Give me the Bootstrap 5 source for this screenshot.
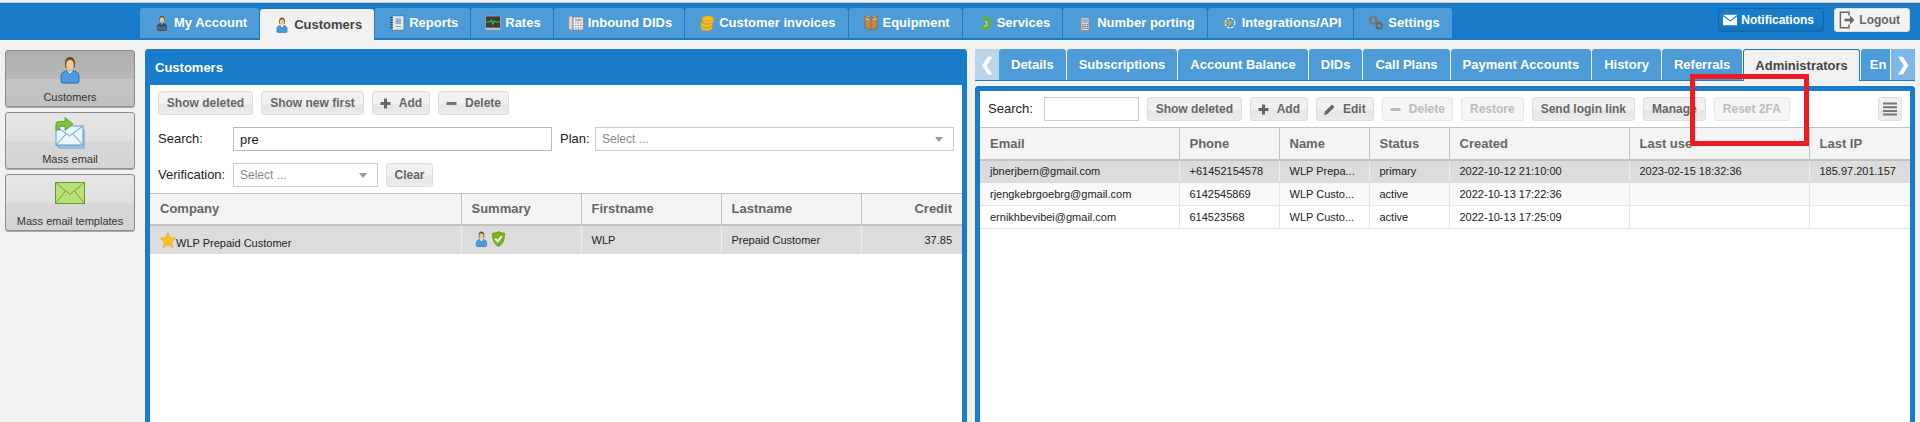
<!DOCTYPE html>
<html lang="en">
<head>
<meta charset="utf-8">
<title>Customers</title>
<link rel="stylesheet" href="https://cdn.jsdelivr.net/npm/bootstrap@5.3.0/dist/css/bootstrap.min.css">
<style>
html,body{height:422px;overflow:hidden}
body{background:#f1f1f1;font-family:"Liberation Sans",Arial,sans-serif;font-size:13px;color:#222;position:relative}
.strip{height:3px;background:#f1f1f1;border-bottom:1px solid #ccc}
.topbar{height:37px;background:#187ccb;padding:5px 10px 0 140px}
.top-nav{column-gap:1px}
.top-tab{height:31px;background:#4d9cd8;color:#fff;font-weight:700;font-size:13px;padding:0 12px 0 14px;border-radius:3px 3px 0 0;gap:4px;border-bottom:1px solid #187ccb}
.top-tab.on{background:#f1f1f1;color:#444;margin-top:1px;border-bottom:0}
.top-tab svg{width:16px;height:16px;flex:none}
.head-btn{height:24px;font-size:12px;font-weight:700;border-radius:3px;gap:4px;padding:0 9px 0 4px}
.head-group{gap:10px}
.notif{width:106px;background:#187ccb;border:1px solid #0f68ad;color:#fff;box-shadow:inset 0 -8px 8px -6px #1269ac}
.logout{width:76px;background:#f3f3f3;border:1px solid #ddd;color:#666}
.main{padding:9px 5px 0;gap:10px;height:382px}
.side{width:130px;flex:none;gap:5px;margin-top:1px}
.side-btn{height:57px;border:1px solid #8d8d8d;border-radius:3px;background:linear-gradient(#e6e6e6 0,#e0e0e0 50%,#d8d8d8 50%,#d4d4d4 100%);font-size:11px;color:#333;padding-top:4px;box-shadow:0 1px 0 #aaa}
.side-btn.on{background:linear-gradient(#adadad 0,#b8b8b8 50%,#c4c4c4 50%,#c0c0c0 100%)}
.side-btn svg{width:30px;height:32px;flex:none}
.side-btn svg.tall{height:28px;margin:1px 0 3px}
.side-btn svg.wide{height:22px;margin:3px 0 7px}
.side-label{line-height:14px;margin-top:3px}
.left-pane{width:822px;flex:none;margin-right:-2px;border:5px solid #187ccb;border-top:0;border-bottom:0;border-radius:4px 4px 0 0;background:#fff;height:390px}
.pane-title{height:36px;background:#187ccb;color:#fff;font-weight:700;font-size:13px;margin:0 -5px;padding:1px 10px 0;border-radius:4px 4px 0 0}
.bar{gap:8px}
.left-bar{padding:6px 8px 0;height:30px}
.tool{height:24px;background:linear-gradient(#f1f1f1 0,#f1f1f1 50%,#e6e6e6 60%,#ececec 100%);border:1px solid #dedede;border-radius:3px;color:#666;font-size:12px;font-weight:700;padding:0;line-height:22px;gap:8px;white-space:nowrap}
.tool:hover{color:#666}
.tool svg{width:11px;height:11px;flex:none}
.tool.off{color:#bcbcbc;background:#f5f5f5;border-color:#e6e6e6}
.w-del{width:95px}.w-new{width:103px}.w-add{width:58px}.w-rem{width:71px}.w-clr{width:47px}
.w-res{width:63px}.w-send{width:103px}.w-man{width:63px}.w-2fa{width:76px}
.lbl{font-size:13px;color:#222}
.plan-lbl{width:35px}
.form-row{padding:0 8px;height:24px;margin-top:12px}
.lbl-a{width:75px;flex:none}
.field{height:24px;border:1px solid #ccc;border-radius:0;background:#fff;font-size:13px;color:#222;padding:0 6px;box-shadow:none;min-height:0}
.field.q{width:319px;flex:none;border-color:#bbb}
.pick{color:#888;font-size:12px}
.caret{width:0;height:0;border-left:4px solid transparent;border-right:4px solid transparent;border-top:5px solid #999}
.plan{width:359px;flex:none}
.verify{width:145px;flex:none}
.grid-wrap{margin-top:6px}
.data-grid{table-layout:fixed;width:100%;margin:0}
.data-grid.table>:not(caption)>*>*{padding:0 10px;border:0;border-right:1px solid #e4e4e4;border-bottom:1px solid #e4e4e4;font-size:11px;color:#222;background:transparent;box-shadow:none;white-space:nowrap;overflow:hidden}
.data-grid.table>thead>tr>th{height:31px;background:#f4f4f4;color:#666;font-weight:700;font-size:13px;border-top:1px solid #c2c2c2;border-right:1px solid #c2c2c2;border-bottom:2px solid #c2c2c2;vertical-align:middle}
.data-grid.table.rg>thead>tr>th{height:32px}
.data-grid.table>tbody>tr.sel>td{background:#dcdcdc;border-right-color:#eee;border-bottom-color:#dcdcdc}
.data-grid.table>tbody>tr.alt>td{background:#f9f9f9}
.data-grid.table>:not(caption)>*>*:last-child{border-right:0}
.lg td{height:29px;vertical-align:top}
.lg td.pad{padding-top:6px!important}
.lg .co{font-size:11px!important;padding-top:6px!important}
.lg .co svg{width:16px;height:16px;vertical-align:-1px}
.lg .sm svg{width:13px;height:16px;vertical-align:top}
.lg .sm{padding-top:5px!important;padding-left:13px!important}
.c1{width:311px}.c2{width:120px}.c3{width:140px}.c4{width:140px}
.rg td{height:23px;vertical-align:middle}
.d1{width:199px}.d2{width:100px}.d3{width:90px}.d4{width:80px}.d5{width:180px}.d6{width:180px}
.right-pane{width:940px;flex:none}
.rt-row{height:32px;border-bottom:1px solid #187ccb}
.nav-arrow{width:24px;height:31px;flex:none;color:#fff;font-size:17px;font-weight:700;background:#b9d5ea;padding:0}
.nav-arrow.next{background:#7fb8e4}
.rt-strip{gap:1px;flex:1;overflow:hidden;height:32px}
.rt-tab{height:31px;background:#4d9cd8;color:#fff;font-size:13px;font-weight:700;padding:0 12px;white-space:nowrap;flex:none;border-radius:3px 3px 0 0}
.rt-tab.on{height:32px;background:#f1f1f1;color:#444;border:1px solid #187ccb;border-bottom:0;padding:0 11px}
.rt-tab.cut{width:29px;padding:0 0 0 9px;border-radius:3px 0 0 0}
.rt-box{margin-top:5px;border:5px solid #187ccb;border-bottom:0;border-radius:4px 4px 0 0;background:#fff;height:340px}
.rt-bar{height:36px;padding:6px 8px}
.rt-q{width:95px;flex:none;margin-left:3px}
.menu-btn{width:24px;padding:0;margin-left:auto}
.menu-btn svg{width:16px;height:16px}
.mark-box{position:absolute;left:1690px;top:74px;width:119px;height:72px;border:5px solid #ed1c24;pointer-events:none}
</style>
</head>
<body>
<svg width="0" height="0" class="position-absolute">
<defs>
<symbol id="i-person" viewBox="0 0 16 22"><path d="M4 6.500C4 2.500 5.500.7 8 .7s4 1.800 4 5.800l-.6 3H4.600z" fill="#7a4a22"/><ellipse cx="8" cy="7" rx="3" ry="4" fill="#f2c79a"/><path d="M1 20v-4c0-2.600 2-4 4.500-4.400L8 14l2.500-2.400C13 12 15 13.400 15 16v4c0 .8-.6 1.300-1.400 1.300H2.400C1.600 21.300 1 20.800 1 20z" fill="#4a9ae0" stroke="#1d5f9e" stroke-width=".7"/><path d="M5.600 11.600 8 14l2.400-2.400L8 12.500z" fill="#fff"/></symbol>
<symbol id="i-suit" viewBox="0 0 16 22"><path d="M4.500 6C4.500 2.500 5.800 1 8 1s3.500 1.500 3.500 5l-.5 3H5z" fill="#7a4a22"/><ellipse cx="8" cy="7" rx="2.800" ry="3.800" fill="#efc090"/><path d="M1.500 20v-4c0-2.500 2-4 4.300-4.400L8 15l2.200-3.400c2.300.4 4.300 1.900 4.300 4.400v4c0 .8-.6 1.300-1.400 1.300H2.900c-.8 0-1.400-.5-1.400-1.300z" fill="#3d4a5c" stroke="#222c38" stroke-width=".6"/><path d="M1.500 16h13v4.500h-13z" fill="#59687c"/></symbol>
<symbol id="i-notebook" viewBox="0 0 16 16"><rect x="3" y=".7" width="12" height="14.600" fill="#dfe9f3" stroke="#5b7c9e"/><rect x="6.500" y="3.500" width="5.500" height="5.500" fill="#8fb2d1"/><path d="M6.500 11.500H12" stroke="#8aa"/><path d="M1 2.500h3M1 5h3M1 7.500h3M1 10h3M1 12.500h3" stroke="#445"/></symbol>
<symbol id="i-monitor" viewBox="0 0 16 16"><rect x=".5" y="1" width="15" height="12" fill="#3a3d3a" stroke="#999"/><path d="M1 7h4.500l1-2.500L8 9.500l1.500-4 .8 1.500H15" stroke="#2fd14b" fill="none"/><rect x=".5" y="13" width="15" height="2" fill="#bbb"/></symbol>
<symbol id="i-phone" viewBox="0 0 16 16"><rect x=".7" y="1" width="4.300" height="14" rx="1.500" fill="#d8d8d8" stroke="#8a8a8a"/><rect x="5" y="2" width="10.300" height="13" fill="#f3f3f3" stroke="#8a8a8a"/><rect x="7" y="3.800" width="6.500" height="2.500" fill="#9ab6cd"/><path d="M7 8h6.500M7 10.500h6.500M7 13h6.500" stroke="#888" stroke-dasharray="1.500 1"/></symbol>
<symbol id="i-coins" viewBox="0 0 16 18"><g fill="#f5bf20" stroke="#d89808" stroke-width=".5"><ellipse cx="9" cy="4" rx="6.500" ry="3"/><path d="M2.500 4v3c0 1.600 2.900 3 6.500 3s6.500-1.400 6.500-3V4c0 1.600-2.900 3-6.500 3s-6.500-1.400-6.500-3z"/><path d="M1 8v3c0 1.600 2.900 3 6.500 3s6.500-1.400 6.500-3V8.500C12 10 10 10.500 7.500 10.500S2 9.500 1 8z"/><path d="M1 11.500v3c0 1.600 2.900 3 6.500 3s6.500-1.400 6.500-3v-3c0 1.600-2.900 3-6.500 3s-6.500-1.400-6.500-3z"/></g></symbol>
<symbol id="i-box" viewBox="0 0 16 18"><path d="M8 4 1 2v12l7 3.500 7-3.500V2z" fill="#bc8a4c" stroke="#80582a" stroke-width=".6"/><path d="M1 2 4.500.5 8 2l3.500-1.500L15 2 8 4.500zM1 2v3.500L5 7l3-2.500L11 7l4-1.500V2" fill="#d9ad72" stroke="#80582a" stroke-width=".5"/><path d="M8 4.500v13" stroke="#80582a" stroke-width=".6"/></symbol>
<symbol id="i-cycle" viewBox="0 0 16 18"><path d="M8 3a6 6 0 1 1-5 9.500" fill="none" stroke="#6cae18" stroke-width="2.600"/><path d="M8.500.5 4 3.300 8.500 6.500z" fill="#6cae18"/><path d="M8 7.500a2.500 2.500 0 1 1-1.500 4.500" fill="none" stroke="#c6dc3a" stroke-width="1.600"/></symbol>
<symbol id="i-mobile" viewBox="0 0 16 18"><rect x="3.500" y="3" width="9" height="14.500" rx="1" fill="#d8d8d8" stroke="#8a8a8a"/><rect x="4.800" y="4.500" width="6.400" height="4.500" fill="#8cb6d8"/><path d="M5 11h1.500m1 0H9m1 0h1.500M5 13h1.500m1 0H9m1 0h1.500M5 15h1.500m1 0H9m1 0h1.500" stroke="#555"/><rect x="10" y=".3" width="1.600" height="3" fill="#888"/></symbol>
<symbol id="i-cog" viewBox="0 0 16 18"><circle cx="8" cy="9" r="5.500" fill="none" stroke="#fff" stroke-width="1.200" stroke-dasharray="3 1.400"/><path d="M1 9h8M6.500 6.300 9.500 9l-3 2.700" stroke="#d8a54a" stroke-width="1.500" fill="none"/></symbol>
<symbol id="i-gears" viewBox="0 0 16 18"><circle cx="5" cy="6" r="3.500" fill="none" stroke="#777" stroke-width="2"/><circle cx="5" cy="6" r="5" fill="none" stroke="#777" stroke-width="1.200" stroke-dasharray="1.500 1.500"/><circle cx="11.500" cy="12" r="3" fill="none" stroke="#666" stroke-width="2"/><circle cx="11.500" cy="12" r="4.300" fill="none" stroke="#666" stroke-width="1.200" stroke-dasharray="1.500 1.500"/></symbol>
<symbol id="i-mail-fwd" viewBox="0 0 30 32"><rect x="4" y="13" width="25" height="18" fill="#c7dff2" stroke="#5f9ccc"/><rect x="2" y="11" width="25" height="18" fill="#dcebf7" stroke="#5f9ccc"/><rect x="1" y="9" width="27" height="19" fill="#eaf4fb" stroke="#5f9ccc"/><path d="m1 9 13.500 10L28 9M1 28l10-11M28 28 18 17" fill="none" stroke="#5f9ccc"/><path d="M1 13V7c0-1.500 1-2.500 3-2.500h6V.5l8 6.500-8 6.500V9H6c-1.200 0-1.500 1-1.500 2v2z" fill="#7ec23e" stroke="#4c8c1e" stroke-width=".7"/></symbol>
<symbol id="i-mail-green" viewBox="0 0 30 22"><rect x=".5" y=".5" width="29" height="21" fill="#b9e07a" stroke="#5f9a23"/><path d="m.5.500 14.500 12L29.500.5M.5 21.500l10-12.500M29.500 21.500 19.500 9" fill="none" stroke="#6ea72b"/></symbol>
<symbol id="i-plus" viewBox="0 0 11 11"><path d="M4 .5h3V4h3.500v3H7v3.500H4V7H.5V4H4z" fill="#666"/></symbol>
<symbol id="i-minus" viewBox="0 0 11 11"><rect x=".5" y="4" width="10" height="3" fill="currentColor"/></symbol>
<symbol id="i-pencil" viewBox="0 0 11 11"><path d="M0 11l1-3.500L8 .5l2.500 2.500-7 7z" fill="#666"/></symbol>
<symbol id="i-env" viewBox="0 0 16 12"><rect width="16" height="12" rx="1" fill="#fff"/><path d="m0 1 8 6 8-6" fill="none" stroke="#187ccb" stroke-width="1.300"/></symbol>
<symbol id="i-exit" viewBox="0 0 18 20"><path d="M11 5V1.500H1.500v17H11V15" fill="none" stroke="#666" stroke-width="1.600"/><path d="M6 8.500h6V5l5 5-5 5v-3.500H6z" fill="#666"/></symbol>
<symbol id="i-star" viewBox="0 0 17 17"><path d="m8.500.5 2.500 5.300 5.800.8-4.200 4 1 5.900-5.100-2.800-5.100 2.800 1-5.900-4.200-4 5.800-.8z" fill="#f5c22e" stroke="#e0a316" stroke-width=".6"/></symbol>
<symbol id="i-shield" viewBox="0 0 14 17"><path d="M7 .5c2 1.200 4 1.700 6.500 1.700 0 7-1.500 11.500-6.500 14.300C2 13.700.5 9.200.5 2.200 3 2.200 5 1.700 7 .5z" fill="#7cb518" stroke="#4e8a10" stroke-width=".7"/><path d="m3.500 8 2.500 3 4.500-5.500" fill="none" stroke="#fff" stroke-width="2"/></symbol>
<symbol id="i-lines" viewBox="0 0 16 16"><path d="M1 2.500h14M1 6.200h14M1 9.900h14M1 13.600h14" stroke="#777" stroke-width="2"/></symbol>
</defs>
</svg>

<div class="strip"></div>
<div class="topbar d-flex align-items-start">
  <nav class="d-flex top-nav">
    <a class="top-tab d-flex align-items-center text-decoration-none"><svg><use href="#i-suit"/></svg>My Account</a>
    <a class="top-tab on d-flex align-items-center text-decoration-none"><svg><use href="#i-person"/></svg>Customers</a>
    <a class="top-tab d-flex align-items-center text-decoration-none"><svg><use href="#i-notebook"/></svg>Reports</a>
    <a class="top-tab d-flex align-items-center text-decoration-none"><svg><use href="#i-monitor"/></svg>Rates</a>
    <a class="top-tab d-flex align-items-center text-decoration-none"><svg><use href="#i-phone"/></svg>Inbound DIDs</a>
    <a class="top-tab d-flex align-items-center text-decoration-none"><svg><use href="#i-coins"/></svg>Customer invoices</a>
    <a class="top-tab d-flex align-items-center text-decoration-none"><svg><use href="#i-box"/></svg>Equipment</a>
    <a class="top-tab d-flex align-items-center text-decoration-none"><svg><use href="#i-cycle"/></svg>Services</a>
    <a class="top-tab d-flex align-items-center text-decoration-none"><svg><use href="#i-mobile"/></svg>Number porting</a>
    <a class="top-tab d-flex align-items-center text-decoration-none"><svg><use href="#i-cog"/></svg>Integrations/API</a>
    <a class="top-tab d-flex align-items-center text-decoration-none"><svg><use href="#i-gears"/></svg>Settings</a>
  </nav>
  <div class="head-group ms-auto d-flex">
    <a class="head-btn notif d-flex align-items-center text-decoration-none"><svg width="16" height="12"><use href="#i-env"/></svg>Notifications</a>
    <a class="head-btn logout d-flex align-items-center text-decoration-none"><svg width="18" height="20"><use href="#i-exit"/></svg>Logout</a>
  </div>
</div>

<div class="main d-flex">
  <aside class="side d-flex flex-column">
    <a class="side-btn on d-flex flex-column align-items-center text-decoration-none"><svg class="tall"><use href="#i-person"/></svg><span class="side-label">Customers</span></a>
    <a class="side-btn d-flex flex-column align-items-center text-decoration-none"><svg><use href="#i-mail-fwd"/></svg><span class="side-label">Mass email</span></a>
    <a class="side-btn d-flex flex-column align-items-center text-decoration-none"><svg class="wide"><use href="#i-mail-green"/></svg><span class="side-label">Mass email templates</span></a>
  </aside>

  <section class="left-pane">
    <div class="pane-title d-flex align-items-center">Customers</div>
    <div class="left-bar bar d-flex">
      <button class="tool btn w-del">Show deleted</button>
      <button class="tool btn w-new">Show new first</button>
      <button class="tool btn w-add d-flex align-items-center justify-content-center"><svg><use href="#i-plus"/></svg>Add</button>
      <button class="tool btn w-rem d-flex align-items-center justify-content-center"><svg class="text-secondary"><use href="#i-minus"/></svg>Delete</button>
    </div>
    <div class="form-row d-flex align-items-center">
      <span class="lbl lbl-a">Search:</span>
      <input class="field q form-control" value="pre" aria-label="Search">
      <span class="lbl plan-lbl ms-2">Plan:</span>
      <div class="field plan d-flex align-items-center justify-content-between pick"><span>Select ...</span><i class="caret me-1"></i></div>
    </div>
    <div class="form-row d-flex align-items-center">
      <span class="lbl lbl-a">Verification:</span>
      <div class="field verify d-flex align-items-center justify-content-between pick"><span>Select ...</span><i class="caret me-1"></i></div>
      <button class="tool btn w-clr ms-2">Clear</button>
    </div>
    <div class="grid-wrap">
      <table class="table data-grid lg">
        <colgroup><col class="c1"><col class="c2"><col class="c3"><col class="c4"><col></colgroup>
        <thead><tr><th>Company</th><th>Summary</th><th>Firstname</th><th>Lastname</th><th class="text-end">Credit</th></tr></thead>
        <tbody><tr class="sel">
          <td class="co"><svg><use href="#i-star"/></svg>WLP Prepaid Customer</td>
          <td class="sm"><svg class="me-1"><use href="#i-person"/></svg><svg><use href="#i-shield"/></svg></td>
          <td class="pad">WLP</td><td class="pad">Prepaid Customer</td><td class="pad text-end">37.85</td>
        </tr></tbody>
      </table>
    </div>
  </section>

  <section class="right-pane">
    <div class="rt-row d-flex">
      <button class="nav-arrow btn rounded-0 d-flex align-items-center justify-content-center">❮</button>
      <div class="rt-strip d-flex">
        <a class="rt-tab d-flex align-items-center text-decoration-none">Details</a>
        <a class="rt-tab d-flex align-items-center text-decoration-none">Subscriptions</a>
        <a class="rt-tab d-flex align-items-center text-decoration-none">Account Balance</a>
        <a class="rt-tab d-flex align-items-center text-decoration-none">DIDs</a>
        <a class="rt-tab d-flex align-items-center text-decoration-none">Call Plans</a>
        <a class="rt-tab d-flex align-items-center text-decoration-none">Payment Accounts</a>
        <a class="rt-tab d-flex align-items-center text-decoration-none">History</a>
        <a class="rt-tab d-flex align-items-center text-decoration-none">Referrals</a>
        <a class="rt-tab on d-flex align-items-center text-decoration-none">Administrators</a>
        <a class="rt-tab cut d-flex align-items-center text-decoration-none">En</a>
      </div>
      <button class="nav-arrow next btn rounded-0 d-flex align-items-center justify-content-center">❯</button>
    </div>
    <div class="rt-box">
      <div class="rt-bar bar d-flex align-items-center">
        <span class="lbl">Search:</span>
        <input class="field rt-q form-control" aria-label="Search">
        <button class="tool btn w-del">Show deleted</button>
        <button class="tool btn w-add d-flex align-items-center justify-content-center"><svg><use href="#i-plus"/></svg>Add</button>
        <button class="tool btn w-add d-flex align-items-center justify-content-center"><svg><use href="#i-pencil"/></svg>Edit</button>
        <button class="tool off btn w-rem d-flex align-items-center justify-content-center"><svg><use href="#i-minus"/></svg>Delete</button>
        <button class="tool off btn w-res">Restore</button>
        <button class="tool btn w-send">Send login link</button>
        <button class="tool btn w-man">Manage</button>
        <button class="tool off btn w-2fa">Reset 2FA</button>
        <button class="tool btn menu-btn d-flex align-items-center justify-content-center"><svg><use href="#i-lines"/></svg></button>
      </div>
      <table class="table data-grid rg">
        <colgroup><col class="d1"><col class="d2"><col class="d3"><col class="d4"><col class="d5"><col class="d6"><col></colgroup>
        <thead><tr><th>Email</th><th>Phone</th><th>Name</th><th>Status</th><th>Created</th><th>Last use</th><th>Last IP</th></tr></thead>
        <tbody>
          <tr class="sel"><td>jbnerjbern@gmail.com</td><td>+61452154578</td><td>WLP Prepa...</td><td>primary</td><td>2022-10-12 21:10:00</td><td>2023-02-15 18:32:36</td><td>185.97.201.157</td></tr>
          <tr class="alt"><td>rjengkebrgoebrg@gmail.com</td><td>6142545869</td><td>WLP Custo...</td><td>active</td><td>2022-10-13 17:22:36</td><td></td><td></td></tr>
          <tr><td>ernikhbevibei@gmail.com</td><td>614523568</td><td>WLP Custo...</td><td>active</td><td>2022-10-13 17:25:09</td><td></td><td></td></tr>
        </tbody>
      </table>
    </div>
  </section>
</div>
<div class="mark-box"></div>
</body>
</html>
